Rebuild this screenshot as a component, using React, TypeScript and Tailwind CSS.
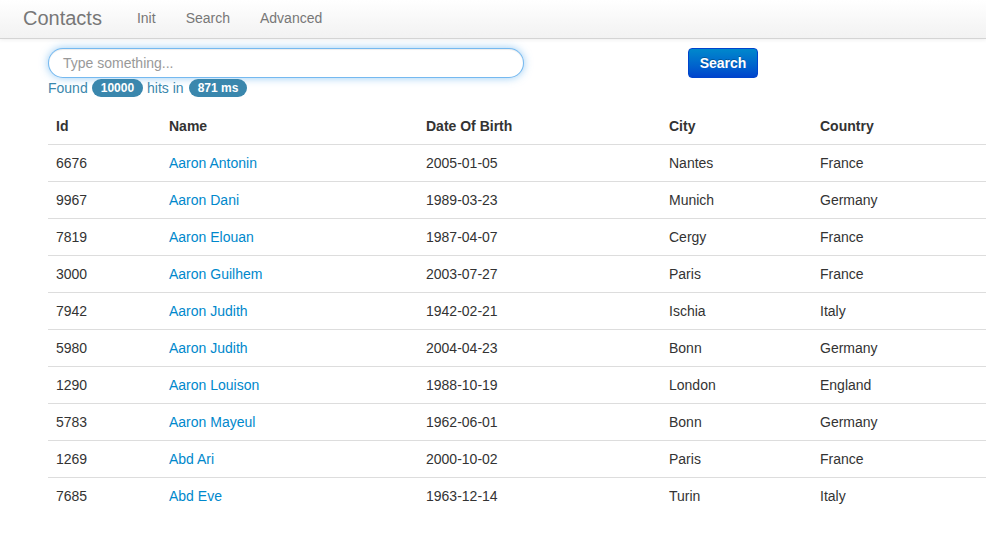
import React from "react";

const rows = [
  ["6676", "Aaron Antonin", "2005-01-05", "Nantes", "France"],
  ["9967", "Aaron Dani", "1989-03-23", "Munich", "Germany"],
  ["7819", "Aaron Elouan", "1987-04-07", "Cergy", "France"],
  ["3000", "Aaron Guilhem", "2003-07-27", "Paris", "France"],
  ["7942", "Aaron Judith", "1942-02-21", "Ischia", "Italy"],
  ["5980", "Aaron Judith", "2004-04-23", "Bonn", "Germany"],
  ["1290", "Aaron Louison", "1988-10-19", "London", "England"],
  ["5783", "Aaron Mayeul", "1962-06-01", "Bonn", "Germany"],
  ["1269", "Abd Ari", "2000-10-02", "Paris", "France"],
  ["7685", "Abd Eve", "1963-12-14", "Turin", "Italy"],
];

export default function App() {
  return (
    <div
      className="min-h-[545px] bg-white text-[14px] leading-[20px] text-[#333]"
      style={{ fontFamily: '"Liberation Sans", Arial, sans-serif' }}
    >
      <div className="relative h-[39px] border-b border-[#d4d4d4] bg-gradient-to-b from-white to-[#f2f2f2] shadow-[0_1px_4px_rgba(0,0,0,0.065)]">
        <div className="flex h-[36px] items-center pl-[3px]">
          <span className="px-5 text-[20px] leading-[20px] text-[#777]">Contacts</span>
          <span className="px-[15px] text-[#777]">Init</span>
          <span className="px-[15px] text-[#777]">Search</span>
          <span className="px-[15px] text-[#777]">Advanced</span>
        </div>
      </div>
      <div className="pl-[48px]">
        <div className="mt-[9px] flex items-center">
          <div className="flex h-[30px] w-[476px] items-center rounded-[15px] border border-[rgba(82,168,236,0.8)] bg-white px-[14px] text-[14px] text-[#999] shadow-[0_0_8px_rgba(82,168,236,0.6),inset_0_1px_1px_rgba(0,0,0,0.075)]">
            Type something...
          </div>
          <div className="ml-[164px] flex h-[30px] w-[70px] items-center justify-center rounded-[4px] border border-[#0044cc] bg-gradient-to-b from-[#0088cc] to-[#0044cc] text-[14px] font-bold text-white [text-shadow:0_-1px_0_rgba(0,0,0,0.25)]">
            Search
          </div>
        </div>
        <div className="flex h-[20px] items-center text-[#3a87ad]">
          <span>Found</span>
          <span className="ml-[4px] rounded-[9px] bg-[#3a87ad] px-[9px] text-[12px] font-bold leading-[18px] text-white">10000</span>
          <span className="ml-[4px]">hits in</span>
          <span className="ml-[5px] rounded-[9px] bg-[#3a87ad] px-[9px] text-[12px] font-bold leading-[18px] text-white">871 ms</span>
        </div>
        <table className="mt-[10px] w-[938px] table-fixed border-collapse">
          <colgroup>
            <col className="w-[113px]" />
            <col className="w-[257px]" />
            <col className="w-[243px]" />
            <col className="w-[151px]" />
            <col />
          </colgroup>
          <thead>
            <tr>
              {["Id", "Name", "Date Of Birth", "City", "Country"].map((h) => (
                <th key={h} className="p-[8px] text-left align-bottom font-bold">
                  {h}
                </th>
              ))}
            </tr>
          </thead>
          <tbody>
            {rows.map((r, i) => (
              <tr key={i}>
                <td className="border-t border-[#dddddd] p-[8px]">{r[0]}</td>
                <td className="border-t border-[#dddddd] p-[8px] text-[#0088cc]">{r[1]}</td>
                <td className="border-t border-[#dddddd] p-[8px]">{r[2]}</td>
                <td className="border-t border-[#dddddd] p-[8px]">{r[3]}</td>
                <td className="border-t border-[#dddddd] p-[8px]">{r[4]}</td>
              </tr>
            ))}
          </tbody>
        </table>
      </div>
    </div>
  );
}
